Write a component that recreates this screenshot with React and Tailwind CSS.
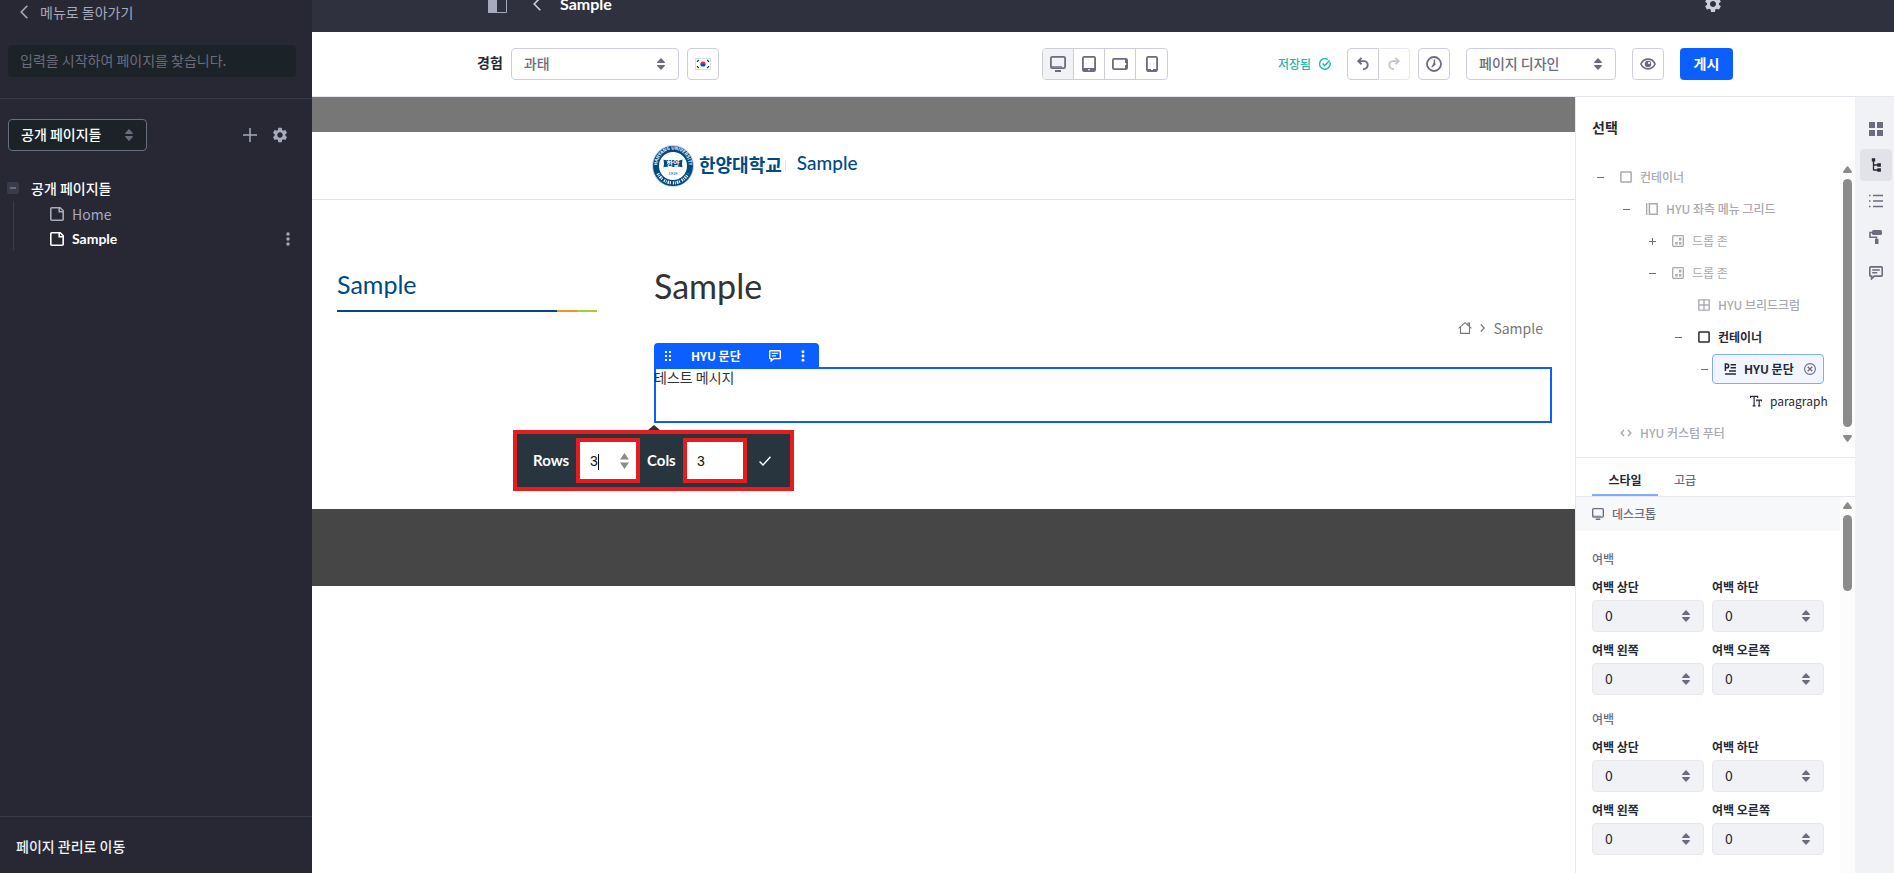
import React, { useState } from 'react';
import { MdSettings } from 'react-icons/md';

/* ========================================================================
   Icons
   ======================================================================== */

const CaretDouble = ({ className = '' }) => (
  <svg viewBox="0 0 8 12" className={`w-2 h-3 fill-current ${className}`} aria-hidden="true">
    <path d="M4 0 8 4.2Q8 5 7.2 5H.8Q0 5 0 4.2zM4 12 8 7.8Q8 7 7.2 7H.8Q0 7 0 7.8z" />
  </svg>
);

const ChevronLeft = ({ className }) => (
  <svg viewBox="0 0 8 14" className={className} fill="none" stroke="currentColor" strokeWidth="1.6" aria-hidden="true">
    <path d="M7.3.7 1.2 7l6.1 6.3" />
  </svg>
);

const PageIcon = () => (
  <svg viewBox="0 0 14 14" className="w-3.5 h-3.5" fill="none" stroke="currentColor" strokeWidth="1.6" aria-hidden="true">
    <path d="M1.8.8h8.4l3 3v8.4a1 1 0 0 1-1 1H1.8a1 1 0 0 1-1-1V1.8a1 1 0 0 1 1-1z" />
    <path d="M9.200 1v3.800H13" />
  </svg>
);

const Kebab = ({ className }) => (
  <svg viewBox="0 0 4 14" className={className} fill="currentColor" aria-hidden="true">
    <circle cx="2" cy="2" r="1.7" />
    <circle cx="2" cy="7" r="1.7" />
    <circle cx="2" cy="12" r="1.7" />
  </svg>
);

const DesktopIcon = ({ className }) => (
  <svg viewBox="0 0 16 16" className={className} aria-hidden="true">
    <rect x=".9" y=".9" width="14.2" height="11.2" rx="1.4" fill="none" stroke="currentColor" strokeWidth="1.8" />
    <path d="M1 10.2h11v1H1zM5 14h6v2H5z" fill="currentColor" />
  </svg>
);

const CommentIcon = ({ className }) => (
  <svg viewBox="0 0 14 14" className={className} fill="none" stroke="currentColor" strokeWidth="1.6" aria-hidden="true">
    <path d="M1.6.9h10.8a.8.8 0 0 1 .8.8v7.6a.8.8 0 0 1-.8.8H5.2L2.6 12.8V10.1h-1a.8.8 0 0 1-.8-.8V1.7a.8.8 0 0 1 .8-.8z" />
    <path d="M3.2 4h7.6M3.2 6.8h5" />
  </svg>
);

const Flag = () => (
  <svg viewBox="0 0 16 12" className="w-4 h-3" aria-hidden="true">
    <rect x=".5" y=".5" width="15" height="11" fill="#fff" stroke="#dcdce4" />
    <path d="M5.4 6a2.6 2.6 0 0 1 5.2 0z" fill="#e0263c" />
    <path d="M5.4 6a2.6 2.6 0 0 0 5.2 0z" fill="#0f4aa3" />
    <path d="M2 3.8 3.8 1.8M12.2 1.8 14 3.8M2 8.2l1.8 2M12.2 10.2l1.8-2" stroke="#222" strokeWidth="1.1" />
  </svg>
);

const TREE_ICONS = {
  container: <rect x=".9" y=".9" width="10.2" height="10.2" rx=".6" />,
  grid: <path d="M.6 0v12M3.4.8h7.8v10.4H3.4z" />,
  dropzone: (
    <>
      <rect x=".7" y=".7" width="10.6" height="10.6" rx=".8" strokeWidth="1.3" />
      <path d="M7 2.800h2.400v2.600H7zM7 6.900h2.400v2.600H7zM3.200 6.900h2.600v2.600H3.200z" fill="currentColor" stroke="none" />
    </>
  ),
  fragment: <path d="M.8.8h10.4v10.4H.8zM6 .8v10.4M.8 6h10.4" strokeWidth="1.3" />,
  paragraph: <path d="M1.4 8V1h1.4a1.8 1.8 0 0 1 0 3.8H1.4M6.6 1.8H12M6.6 4.8H12M5 8h7M1 11h11" />,
  text: <path d="M.6 3V1.4h7V3M4.1 1.4v9.2M2.6 10.8h3M6.8 6.4V5.2h4.8v1.2M9.2 5.2v5.6M8 10.8h2.4" strokeWidth="1.2" />,
  code: <path d="M4 3 1.2 6 4 9M8 3l2.8 3L8 9" strokeWidth="1.5" />,
};

const TreeIcon = ({ name }) => (
  <svg viewBox="0 0 12 12" className="w-3 h-3 shrink-0" fill="none" stroke="currentColor" strokeWidth="1.5" aria-hidden="true">
    {TREE_ICONS[name]}
  </svg>
);

/* ========================================================================
   Shared controls
   ======================================================================== */

function SelectBox({ id, label, value, className, caretClass = 'text-[#6b6c7e] right-3.5' }) {
  return (
    <div className="relative">
      <select
        id={id}
        aria-label={label}
        defaultValue={value}
        className={`block h-8 w-full appearance-none rounded border pb-0.5 pl-3 pr-8 text-sm outline-none ${className}`}
      >
        <option>{value}</option>
      </select>
      <CaretDouble className={`pointer-events-none absolute top-2.5 ${caretClass}`} />
    </div>
  );
}

const iconButton =
  'flex h-8 w-8 items-center justify-center rounded border border-[#cdced9] bg-white text-[#6b6c7e]';

function Scrollbar({ thumbClass, withEnd }) {
  return (
    <div className="flex w-[15px] shrink-0 flex-col items-center bg-[#fcfcfc] py-[5px] text-[#8b8b8b]" aria-hidden="true">
      <svg viewBox="0 0 9 7" className="h-[7px] w-[9px] fill-current">
        <path d="M3.8.6Q4.5-.2 5.2.6L8.8 5.4Q9.2 7 8 7H1Q-.2 7 .2 5.4z" />
      </svg>
      <div className={`mt-1.5 w-[9px] rounded-full bg-[#8b8b8b] ${thumbClass}`} />
      {withEnd && (
        <svg viewBox="0 0 9 7" className="mt-2 h-[7px] w-[9px] rotate-180 fill-current">
          <path d="M3.8.6Q4.5-.2 5.2.6L8.8 5.4Q9.2 7 8 7H1Q-.2 7 .2 5.4z" />
        </svg>
      )}
    </div>
  );
}

/* ========================================================================
   Pages sidebar
   ======================================================================== */

function PagesSidebar() {
  return (
    <aside className="flex w-[312px] shrink-0 flex-col bg-[#272833] text-sm text-[#a7a9bc]">
      <div className="border-b border-[#393a4a] pb-[21px]">
        <button className="flex h-6 items-center gap-3 pl-5">
          <ChevronLeft className="h-3.5 w-2" />
          메뉴로 돌아가기
        </button>
        <div className="mt-[21px] pl-2 pr-4">
          <input
            type="search"
            aria-label="페이지 찾기"
            placeholder="입력을 시작하여 페이지를 찾습니다."
            className="block h-8 w-full rounded bg-[#1c2328] px-3 pb-0.5 text-sm outline-none placeholder:text-[#6b6c7e]"
          />
        </div>
      </div>

      <div className="flex items-center pl-2 pr-[23px] pt-5">
        <div className="w-[139px]">
          <SelectBox
            label="페이지 유형"
            value="공개 페이지들"
            className="border-[#6b6c7e] bg-[#1c2328] font-medium text-white"
            caretClass="right-3.5 text-[#6b6c7e]"
          />
        </div>
        <button aria-label="추가" className="ml-auto mr-3.5">
          <svg viewBox="0 0 14 14" className="h-3.5 w-3.5" stroke="currentColor" strokeWidth="1.5">
            <path d="M7 0v14M0 7h14" />
          </svg>
        </button>
        <button aria-label="설정">
          <MdSettings size={18} />
        </button>
      </div>

      <div className="flex-1 pl-[7px] pt-6">
        <div className="flex h-[26px] items-center gap-3 font-medium text-white">
          <button aria-label="접기" className="flex h-3 w-3 items-center justify-center rounded-xs bg-[#393a4a]">
            <span className="h-0.5 w-1.5 bg-[#6b6c7e]" />
          </button>
          공개 페이지들
        </div>
        <ul className="ml-1.5 mt-1 border-l border-[#393a4a] pl-9">
          <li className="-mt-1 flex h-[25px] items-center gap-2">
            <PageIcon />
            <a href="#home">Home</a>
          </li>
          <li className="flex h-[25px] items-center gap-2 font-bold text-white">
            <PageIcon />
            <a href="#sample" className="font-[Lato]">
              Sample
            </a>
            <button aria-label="더보기" className="ml-auto mr-[22px] text-[#a7a9bc]">
              <Kebab className="h-3.5 w-1" />
            </button>
          </li>
        </ul>
      </div>

      <div className="flex h-[57px] items-center border-t border-[#393a4a] pl-4 pt-0.5">
        <a href="#pages" className="font-medium text-[#f1f2f5]">
          페이지 관리로 이동
        </a>
      </div>
    </aside>
  );
}

/* ========================================================================
   Header and editor toolbar
   ======================================================================== */

function TopBar() {
  return (
    <header className="h-8 overflow-hidden bg-[#30313f]">
      <div className="-mt-6 flex h-14 items-center pl-[176px] text-[#cdced9]">
        <button aria-label="패널 전환" className="text-[#a7a9bc]">
          <svg viewBox="0 0 19 18" className="h-[18px] w-[19px]">
            <path d="M.5.5h18v17H.5z" fill="none" stroke="currentColor" />
            <path d="M0 0h9v18H0z" fill="currentColor" />
          </svg>
        </button>
        <button aria-label="뒤로" className="ml-[26px]">
          <ChevronLeft className="h-3.5 w-2" />
        </button>
        <h1 className="ml-[19px] font-[Lato] text-base font-bold text-white">Sample</h1>
        <button aria-label="설정" className="ml-auto mr-[171px]">
          <MdSettings size={20} />
        </button>
      </div>
    </header>
  );
}

const DEVICES = [
  { id: 'desktop', label: '데스크톱', icon: <DesktopIcon className="h-4 w-4" /> },
  {
    id: 'tablet',
    label: '태블릿',
    icon: (
      <svg viewBox="0 0 14 16" className="h-4 w-3.5">
        <rect x=".9" y=".9" width="12.2" height="14.2" rx="1.4" fill="none" stroke="currentColor" strokeWidth="1.8" />
        <path d="M1 12h12v3H8v-1.800H6V15H1z" fill="currentColor" />
      </svg>
    ),
  },
  {
    id: 'landscape',
    label: '가로 모드 전화',
    icon: (
      <svg viewBox="0 0 16 12" className="h-3 w-4">
        <rect x=".9" y=".9" width="14.2" height="10.2" rx="1.4" fill="none" stroke="currentColor" strokeWidth="1.8" />
        <path d="M13 1h2v4h-2zM13 7h2v4h-2z" fill="currentColor" />
      </svg>
    ),
  },
  {
    id: 'portrait',
    label: '세로 모드 전화',
    icon: (
      <svg viewBox="0 0 12 16" className="h-4 w-3">
        <rect x=".9" y=".9" width="10.2" height="14.2" rx="1.4" fill="none" stroke="currentColor" strokeWidth="1.8" />
        <path d="M1 13h4v1h2v-1h4v2H1z" fill="currentColor" />
      </svg>
    ),
  },
];

function EditorToolbar() {
  const [device, setDevice] = useState('desktop');

  return (
    <div className="border-b border-[#e7e7ed] bg-white">
      <div className="mx-auto grid h-16 max-w-[1260px] grid-cols-[1fr_auto_1fr] items-center pl-1">
        {/* Experience */}
        <div className="flex items-center gap-2">
          <label htmlFor="experience" className="pb-1 text-sm font-bold text-[#272833]">
            경험
          </label>
          <div className="w-[168px]">
            <SelectBox id="experience" value="과태" className="border-[#cdced9] bg-white font-medium text-[#6b6c7e]" />
          </div>
          <button aria-label="한국어" className={iconButton}>
            <Flag />
          </button>
        </div>

        {/* Viewport sizes */}
        <div className="flex divide-x divide-[#cdced9] overflow-hidden rounded border border-[#cdced9] text-[#6b6c7e]">
          {DEVICES.map((d) => (
            <button
              key={d.id}
              aria-label={d.label}
              onClick={() => setDevice(d.id)}
              className={`flex h-[30px] w-[31px] items-center justify-center ${device === d.id ? 'bg-[#f1f2f5]' : ''}`}
            >
              {d.icon}
            </button>
          ))}
        </div>

        {/* Actions */}
        <div className="flex items-center justify-end">
          <span className="text-xs font-medium text-[#1fb9a3]">저장됨</span>
          <svg viewBox="0 0 12 12" className="ml-2 h-3 w-3 text-[#1fb9a3]" fill="none" stroke="currentColor" strokeWidth="1.4">
            <path d="M10.9 4.2A5.3 5.3 0 1 1 8.8 1.5M3.6 5.6l2.1 2.2 5-5.6" />
          </svg>
          <button aria-label="실행 취소" className={`${iconButton} ml-4 rounded-r-none`}>
            <svg viewBox="0 0 12 14" className="h-3.5 w-3" fill="none" stroke="currentColor" strokeWidth="1.9">
              <path d="M4.6.8 1.3 4.1l3.3 3.2M1.5 4.1h5.2a3.9 3.9 0 0 1 0 8H6" />
            </svg>
          </button>
          <button
            aria-label="다시 실행"
            disabled
            className="flex h-8 w-[31px] items-center justify-center rounded-r border border-l-0 border-[#e7e7ed] text-[#c4c5ce]"
          >
            <svg viewBox="0 0 12 14" className="h-3.5 w-3 -scale-x-100" fill="none" stroke="currentColor" strokeWidth="1.9">
              <path d="M4.6.8 1.3 4.1l3.3 3.2M1.5 4.1h5.2a3.9 3.9 0 0 1 0 8H6" />
            </svg>
          </button>
          <button aria-label="기록" className={`${iconButton} ml-2`}>
            <svg viewBox="0 0 16 16" className="h-4 w-4" fill="none" stroke="currentColor" strokeWidth="1.8">
              <circle cx="8" cy="8" r="7" />
              <path d="M8.4 3.5v4.8L5.8 11" strokeWidth="1.5" />
              <circle cx="8.2" cy="8.2" r=".9" fill="currentColor" strokeWidth="1" />
            </svg>
          </button>
          <div className="ml-4 w-[150px]">
            <SelectBox label="편집 모드" value="페이지 디자인" className="border-[#cdced9] bg-white font-medium text-[#6b6c7e]" />
          </div>
          <button aria-label="미리보기" className={`${iconButton} ml-4`}>
            <svg viewBox="0 0 16 12" className="h-3 w-4" fill="none" stroke="currentColor" strokeWidth="1.7">
              <path d="M.9 6C2.4 2.9 5 1.2 8 1.2S13.6 2.9 15.1 6C13.6 9.1 11 10.800 8 10.800S2.4 9.100.9 6z" />
              <circle cx="8" cy="6" r="2.4" fill="currentColor" />
              <circle cx="9" cy="5" r="1.1" fill="#fff" stroke="none" />
            </svg>
          </button>
          <button className="ml-4 h-8 w-[53px] rounded bg-[#0b5fff] pb-0.5 text-sm font-bold text-white">게시</button>
        </div>
      </div>
    </div>
  );
}

/* ========================================================================
   Page canvas
   ======================================================================== */

function Seal() {
  return (
    <svg viewBox="0 0 42 42" className="h-[42px] w-[42px] shrink-0" aria-hidden="true">
      <defs>
        <path id="ring-top" d="M6.2 25A15.6 15.6 0 1 1 35.8 25" />
      </defs>
      <circle cx="21" cy="21" r="20.5" fill="#fff" stroke="#9db4cb" strokeWidth=".6" />
      <circle cx="21" cy="21" r="17" fill="none" stroke="#004a84" strokeWidth="6" />
      <text fontSize="4.5" fontWeight="700" fill="#fff">
        <textPath href="#ring-top" startOffset="50%" textAnchor="middle">
          HANYANG UNIVERSITY
        </textPath>
      </text>
      <path
        d="M5.8 28.500A17 17 0 0 0 36.200 28.500"
        fill="none"
        stroke="#fff"
        strokeWidth="3"
        strokeDasharray="1.2 .9 .8 1.100 1.500 .8 1 2"
      />
      <path d="M11.5 14.500q2 1 4 .5h11q2 .5 4-.5l-.5 4 .5 4q-2-1-4-.5h-11q-2-.5-4 .5l.5-4z" fill="#004a84" />
      <text x="21" y="21" fontSize="7" fontWeight="700" fill="#fff" textAnchor="middle">
        한양
      </text>
      <text x="21" y="29.5" fontSize="4" fill="#004a84" textAnchor="middle">
        1939
      </text>
    </svg>
  );
}

function TableSizePopup() {
  return (
    <div className="absolute -left-[143px] top-[61px] h-[61px] w-[281px] border-4 border-[#e81c1c] bg-[#28353e]">
      <svg viewBox="0 0 12 5" className="absolute -top-[9px] left-[131px] h-[5px] w-3 fill-[#28353e]" aria-hidden="true">
        <path d="M6 0l6 5H0z" />
      </svg>
      <div className="flex h-full items-center pl-4 font-[Lato] text-[15px] font-bold text-white">
        <label htmlFor="rows" className="w-[35px]">
          Rows
        </label>
        <div className="relative ml-2 h-[45px] w-16 border-4 border-[#e81c1c] bg-white">
          <input
            id="rows"
            type="number"
            defaultValue="3"
            className="h-full w-full appearance-none pl-2.5 font-[Liberation_Sans] text-sm font-normal text-[#111] outline-none [appearance:textfield]"
          />
          <span className="absolute left-[18px] top-3 h-4 w-px bg-black" />
          <svg viewBox="0 0 9 16" className="absolute right-[7px] top-[11px] h-4 w-[9px] fill-[#8b8b8b]" aria-hidden="true">
            <path d="M4.5 0 9 6.500H0zM4.5 16 9 9.500H0z" />
          </svg>
        </div>
        <label htmlFor="cols" className="ml-[7px] w-7">
          Cols
        </label>
        <div className="ml-2 h-[45px] w-16 border-4 border-[#e81c1c] bg-white">
          <input
            id="cols"
            type="number"
            defaultValue="3"
            className="h-full w-full appearance-none pl-2.5 font-[Liberation_Sans] text-sm font-normal text-[#111] outline-none [appearance:textfield]"
          />
        </div>
        <button aria-label="확인" className="ml-3">
          <svg viewBox="0 0 12 10" className="h-2.5 w-3" fill="none" stroke="currentColor" strokeWidth="1.4">
            <path d="M.6 5.5 4 9l7.5-8.3" />
          </svg>
        </button>
      </div>
    </div>
  );
}

function Canvas() {
  return (
    <main className="min-w-0 flex-1 bg-white">
      <div className="h-[35px] bg-[#777]" />
      <div className="flex h-[68px] items-center border-b border-[#e2e2e2] pl-[340px] text-[#004a84]">
        <Seal />
        <span className="ml-[5px] pb-1 text-lg font-bold">한양대학교</span>
        <span className="ml-[3px] h-2.5 w-px bg-[#dde3ea]" />
        <a href="#site" className="ml-[11px] pb-1 font-[Lato] text-[19px] font-medium">
          Sample
        </a>
      </div>

      <div className="flex pb-[86px] pl-[25px] pr-[23px]">
        <div className="w-[260px] shrink-0 pt-16">
          <h2 className="font-[Lato] text-[25px] leading-10 text-[#004a84]">Sample</h2>
          <div className="mt-1.5 flex h-0.5">
            <div className="flex-1 bg-[#004a84]" />
            <div className="w-5 bg-[#f8941d]" />
            <div className="w-5 bg-[#a6ce39]" />
          </div>
        </div>

        <div className="ml-[57px] min-w-0 flex-1 pt-14">
          <h1 className="font-[Lato] text-[34px] leading-[60px] text-[#333]">Sample</h1>
          <nav className="mt-px flex h-[22px] items-center justify-end gap-2 pr-[9px] text-sm text-[#777]">
            <svg viewBox="0 0 14 12" className="h-3 w-3.5" fill="none" stroke="currentColor" strokeWidth="1.1">
              <path d="M.6 6.3 7 .7l6.4 5.6M2.5 5v6.4h9V5M10 3V1h1.5v3" />
            </svg>
            <svg viewBox="0 0 5 8" className="h-2 w-[5px]" fill="none" stroke="currentColor" strokeWidth="1.3">
              <path d="M.8.5 4.2 4 .8 7.5" />
            </svg>
            <a href="#sample">Sample</a>
          </nav>

          {/* Selected fragment */}
          <div className="relative mt-7 h-14 border-2 border-[#0b5fff]">
            <p className="-ml-0.5 text-sm leading-4 text-[#333]">테스트 메시지</p>
            <div className="absolute -left-0.5 -top-[26px] flex h-[26px] w-[165px] items-center rounded-t bg-[#0b5fff] text-xs font-bold text-white">
              <svg viewBox="0 0 6 10" className="ml-[11px] h-2.5 w-1.5 fill-current" aria-hidden="true">
                <path d="M0 0h2v2H0zM4 0h2v2H4zM0 4h2v2H0zM4 4h2v2H4zM0 8h2v2H0zM4 8h2v2H4z" />
              </svg>
              <span className="ml-5">HYU 문단</span>
              <button aria-label="댓글" className="ml-auto">
                <CommentIcon className="h-3 w-3" />
              </button>
              <button aria-label="옵션" className="ml-5 mr-3.5">
                <Kebab className="h-3 w-1" />
              </button>
            </div>
            <TableSizePopup />
          </div>
        </div>
      </div>

      <div className="h-[77px] bg-[#464646]" />
    </main>
  );
}

/* ========================================================================
   Right panel
   ======================================================================== */

const TREE = [
  { label: '컨테이너', icon: 'container', pad: 'pl-4', toggle: '-', muted: true },
  { label: 'HYU 좌측 메뉴 그리드', icon: 'grid', pad: 'pl-[42px]', toggle: '-', muted: true },
  { label: '드롭 존', icon: 'dropzone', pad: 'pl-[68px]', toggle: '+', muted: true, light: true },
  { label: '드롭 존', icon: 'dropzone', pad: 'pl-[68px]', toggle: '-', muted: true, light: true },
  { label: 'HYU 브리드크럼', icon: 'fragment', pad: 'pl-[94px]', muted: true },
  { label: '컨테이너', icon: 'container', pad: 'pl-[94px]', toggle: '-' },
  { label: 'HYU 문단', icon: 'paragraph', pad: 'pl-[120px]', toggle: '-', selected: true },
  { label: 'paragraph', icon: 'text', pad: 'pl-[146px]', light: true },
  { label: 'HYU 커스텀 푸터', icon: 'code', pad: 'pl-4', muted: true },
];

function TreeRow({ node }) {
  return (
    <li className={`flex h-8 items-center text-xs ${node.pad} ${node.muted ? 'text-[#a9a9b0]' : 'text-[#272833]'}`}>
      <span className="flex w-4 shrink-0 justify-center">
        {node.toggle && (
          <button aria-label={node.toggle === '-' ? '접기' : '펼치기'} className="text-[#6b6c7e]">
            <svg viewBox="0 0 7 7" className="h-[7px] w-[7px]" stroke="currentColor">
              <path d={node.toggle === '-' ? 'M0 3.5h7' : 'M0 3.5h7M3.5 0v7'} />
            </svg>
          </button>
        )}
      </span>
      <div
        className={`flex h-[30px] items-center gap-2 rounded border pl-[11px] ${
          node.selected ? 'w-[112px] border-[#80acff] bg-[#f0f5ff]' : 'border-transparent'
        } ${node.light ? '' : node.muted ? 'font-medium' : 'font-bold'}`}
      >
        <TreeIcon name={node.icon} />
        <span className="whitespace-nowrap">{node.label}</span>
        {node.selected && (
          <button aria-label="삭제" className="ml-auto mr-[7px] text-[#6b6c7e]">
            <svg viewBox="0 0 12 12" className="h-3 w-3" fill="none" stroke="currentColor" strokeWidth="1.1">
              <circle cx="6" cy="6" r="5.4" />
              <path d="M3.7 3.7l4.6 4.6M8.3 3.7 3.7 8.3" strokeWidth="1.3" />
            </svg>
          </button>
        )}
      </div>
    </li>
  );
}

const SPACING_FIELDS = ['여백 상단', '여백 하단', '여백 왼쪽', '여백 오른쪽'];

function SpacingGroup({ name }) {
  return (
    <fieldset className="mb-3.5">
      <legend className="text-xs font-medium leading-5 text-[#6b6c7e]">여백</legend>
      <div className="mt-2 grid grid-cols-2 gap-2">
        {SPACING_FIELDS.map((label, i) => (
          <div key={label}>
            <label htmlFor={`${name}-${i}`} className="mb-[3px] block text-xs font-bold leading-5 text-[#272833]">
              {label}
            </label>
            <SelectBox id={`${name}-${i}`} value="0" className="border-[#e7e7ed] bg-[#f1f2f5] text-[#272833]" />
          </div>
        ))}
      </div>
    </fieldset>
  );
}

function ConfigPanel() {
  return (
    <section className="flex w-[280px] shrink-0 flex-col border-l border-[#e7e7ed] bg-white">
      <h2 className="h-16 pl-4 pt-5 text-sm font-bold text-[#272833]">선택</h2>

      {/* Element tree */}
      <div className="flex h-[286px] shrink-0">
        <ul className="min-w-0 flex-1">
          {TREE.map((node, i) => (
            <TreeRow key={i} node={node} />
          ))}
        </ul>
        <Scrollbar thumbClass="h-[248px]" withEnd />
      </div>

      {/* Tabs */}
      <div className="mt-2.5 flex h-10 shrink-0 border-b border-t border-[#e7e7ed] px-4 text-xs">
        <button className="w-[66px] border-b-2 border-[#80acff] pt-2 font-bold text-[#272833]">스타일</button>
        <button className="ml-4 pt-1.5 font-medium text-[#6b6c7e]">고급</button>
      </div>

      <div className="flex min-h-0 flex-1 overflow-hidden">
        <div className="min-w-0 flex-1">
          <div className="flex h-[34px] items-center gap-2 bg-[#f7f8f9] pl-4 text-xs font-medium text-[#6b6c7e]">
            <DesktopIcon className="h-3 w-3" />
            데스크톱
          </div>
          <div className="px-4 pt-[18px]">
            <SpacingGroup name="margin" />
            <SpacingGroup name="padding" />
          </div>
        </div>
        <Scrollbar thumbClass="h-[76px]" />
      </div>
    </section>
  );
}

const RAIL = [
  {
    label: '프래그먼트',
    icon: <path d="M1 1h6v6H1zM9 1h6v6H9zM1 9h6v6H1zM9 9h6v6H9z" fill="currentColor" stroke="none" />,
  },
  {
    label: '탐색기',
    active: true,
    icon: (
      <>
        <path d="M5.5 3v10.200M5.5 8H11M5.5 13H11" strokeWidth="1.3" />
        <path d="M3.8 1.200h3.400v3.400H3.800zM9.300 6.300h3.600v3.400H9.300zM9.300 11.300h3.600v3.400H9.300z" fill="currentColor" stroke="none" />
      </>
    ),
  },
  { label: '목록', icon: <path d="M1 2.5h1.500M5 2.500h10M1 8h1.500M5 8h10M1 13.500h1.500M5 13.500h10" strokeWidth="1.4" /> },
  {
    label: '디자인',
    icon: (
      <>
        <rect x="4" y="1" width="10" height="5" rx="1.5" fill="currentColor" stroke="none" />
        <path d="M4.5 3.500H2v4.700h6.500V11" strokeWidth="1.6" />
        <path d="M7 10h3.500v5H7z" fill="currentColor" stroke="none" />
      </>
    ),
  },
];

function SideRail() {
  return (
    <nav className="flex w-[39px] shrink-0 flex-col gap-1 bg-[#f1f2f5] pl-[5px] pt-4 text-[#6b6c7e]">
      {RAIL.map((item) => (
        <button
          key={item.label}
          aria-label={item.label}
          className={`flex h-8 w-8 items-center justify-center rounded ${item.active ? 'bg-[#e2e3e8] text-[#272833]' : ''}`}
        >
          <svg viewBox="0 0 16 16" className="h-4 w-4" fill="none" stroke="currentColor">
            {item.icon}
          </svg>
        </button>
      ))}
      <button aria-label="댓글" className="flex h-8 w-8 items-center justify-center">
        <CommentIcon className="h-3.5 w-3.5" />
      </button>
    </nav>
  );
}

export default function App() {
  return (
    <div className="flex h-screen overflow-hidden bg-white font-['Noto_Sans_CJK_KR',sans-serif]">
      <PagesSidebar />
      <div className="flex min-w-0 flex-1 flex-col">
        <TopBar />
        <EditorToolbar />
        <div className="flex min-h-0 flex-1">
          <Canvas />
          <ConfigPanel />
          <SideRail />
        </div>
      </div>
    </div>
  );
}
